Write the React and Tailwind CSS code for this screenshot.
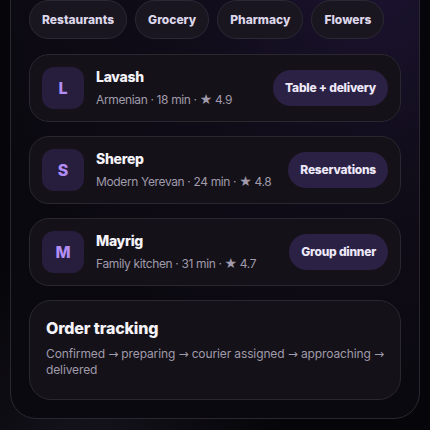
import React from "react";

const chips = ["Restaurants", "Grocery", "Pharmacy", "Flowers"];
const places = [
  { l: "L", name: "Lavash", sub: "Armenian · 18 min · ", r: "4.9", badge: "Table + delivery" },
  { l: "S", name: "Sherep", sub: "Modern Yerevan · 24 min · ", r: "4.8", badge: "Reservations" },
  { l: "M", name: "Mayrig", sub: "Family kitchen · 31 min · ", r: "4.7", badge: "Group dinner" },
];

const Arrow = () => (
  <span style={{ fontFamily: "'DejaVu Sans', sans-serif" }}>→</span>
);

export default function App() {
  return (
    <div
      className="w-[430px] h-[430px] overflow-hidden bg-[radial-gradient(circle_at_20%_105%,#15131c_0%,#060509_35%)]"
      style={{ fontFamily: "Inter, 'Noto Sans', sans-serif" }}
    >
      <div className="ml-[10px] -mt-[19px] w-[410px] rounded-b-[26px] border border-[#2a2731] bg-[radial-gradient(circle_at_90%_0%,#1b1330_0%,#100c18_35%,#0b0910_70%)] px-[18px] pt-[18px] pb-[18px] flex flex-col gap-[14px]">
        <div className="flex gap-2 mb-px">
          {chips.map((c) => (
            <div
              key={c}
              className="h-[39px] px-[12px] flex items-center rounded-full border border-[#2c2934] bg-[#19161f] text-[12px] font-extrabold text-[#ddd6ea]"
            >
              {c}
            </div>
          ))}
        </div>
        {places.map((p) => (
          <div
            key={p.name}
            className="h-[68px] rounded-[20px] border border-[#29272f] bg-[#141218] px-[12px] flex items-center"
          >
            <div className="w-[42px] h-[42px] rounded-[12px] bg-[#261e3c] flex items-center justify-center text-[16px] font-extrabold text-[#b28df5]">
              {p.l}
            </div>
            <div className="ml-[12px] flex flex-col gap-[2px] flex-1">
              <div className="text-[14px] leading-[20px] font-extrabold tracking-[-0.02em] text-[#f5f3f8]">{p.name}</div>
              <div className="text-[12px] leading-[20px] tracking-[-0.03em] text-[#a09aab] whitespace-nowrap">
                {p.sub}
                <span className="text-[14px]" style={{ fontFamily: "'DejaVu Sans', sans-serif" }}>★</span> {p.r}
              </div>
            </div>
            <div className="h-[36px] px-[12px] rounded-full bg-[#2a2144] flex items-center text-[12px] font-extrabold tracking-[-0.02em] text-[#eee8f8]">
              {p.badge}
            </div>
          </div>
        ))}
        <div className="rounded-[22px] border border-[#29272f] bg-[#141218] px-[16px] pt-[15px] pb-[21px]">
          <div className="text-[16px] leading-[24px] font-extrabold tracking-[-0.01em] text-[#f5f3f8]">Order tracking</div>
          <div className="mt-[6px] text-[12px] leading-[16px] tracking-[-0.01em] text-[#a09aab]">
            Confirmed <Arrow /> preparing <Arrow /> courier assigned <Arrow /> approaching <Arrow /> delivered
          </div>
        </div>
      </div>
    </div>
  );
}
